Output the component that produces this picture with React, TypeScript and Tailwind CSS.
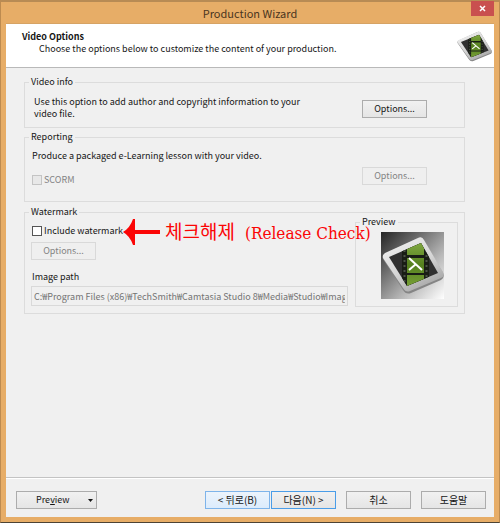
import type { ReactNode } from "react";

const uiFont = "font-['Noto_Sans_CJK_KR',sans-serif]";

type GroupProps = { title: string; className?: string; children: ReactNode };

function Group({ title, className = "", children }: GroupProps) {
  return (
    <fieldset className={`min-w-0 border border-[#dcdcdc] ${className}`}>
      <legend className="ml-1 px-0.5 leading-3">{title}</legend>
      {children}
    </fieldset>
  );
}

type ButtonProps = { tone?: "normal" | "hot" | "focus"; disabled?: boolean; children: ReactNode };

const tones = {
  normal: "border-[#acacac] bg-linear-to-b from-[#f1f1f1] to-[#e5e5e5]",
  hot: "border-[#7eb4ea] bg-linear-to-b from-[#ecf4fc] to-[#dcecfc]",
  focus: "border-[#4a9de8] bg-linear-to-b from-[#f1f1f1] to-[#e5e5e5]",
};

function Button({ tone = "normal", disabled = false, children }: ButtonProps) {
  return (
    <button
      type="button"
      disabled={disabled}
      className={`h-[18px] w-[65px] shrink-0 border text-center leading-4 whitespace-nowrap ${
        disabled ? "border-[#d9d9d9] bg-[#efefef] text-[#838383]" : tones[tone]
      }`}
    >
      {children}
    </button>
  );
}

function Logo({ className, backdrop = false }: { className: string; backdrop?: boolean }) {
  const id = backdrop ? "large" : "small";
  return (
    <svg
      className={className}
      viewBox={backdrop ? "0 0 63 67" : "1 4 62 59"}
      preserveAspectRatio="none"
      aria-hidden="true"
    >
      <defs>
        <linearGradient id={`${id}-back`} x1="0" y1="0" x2="1" y2="1">
          <stop offset="0" stopColor="#252525" />
          <stop offset=".3" stopColor="#666" />
          <stop offset=".65" stopColor="#b8b8b8" />
          <stop offset="1" stopColor="#fff" />
        </linearGradient>
        <linearGradient id={`${id}-frame`} x1="0" y1="0" x2=".6" y2="1">
          <stop offset="0" stopColor="#f4f4f4" />
          <stop offset=".6" stopColor="#d6d6d6" />
          <stop offset="1" stopColor="#a9a9a9" />
        </linearGradient>
        <linearGradient id={`${id}-green`} x1="0" y1="0" x2="0" y2="1">
          <stop offset="0" stopColor="#86ad45" />
          <stop offset=".5" stopColor="#55801f" />
          <stop offset="1" stopColor="#7da53a" />
        </linearGradient>
        <clipPath id={`${id}-screen`}>
          <path d="M8 25 40 11 57 41 26 54Z" />
        </clipPath>
      </defs>
      {backdrop && <rect width="63" height="67" fill={`url(#${id}-back)`} />}
      <path
        d="M2 27Q1 24 4 22L37 6Q41 4 43 8L62 41Q64 46 60 48L30 61Q25 63 22 58Z"
        fill="#858585"
      />
      <path
        d="M2 26Q1 23 4 21L37 6Q41 4 43 8L62 40Q64 44 60 46L29 59Q25 61 22 56Z"
        fill={`url(#${id}-frame)`}
      />
      <path d="M8 25 40 11 57 41 26 54Z" fill="#303030" />
      <g clipPath={`url(#${id}-screen)`}>
        <rect x="21" y="8" width="27" height="50" fill="#191d15" />
        <path d="M26 8H43V23H26ZM26 26H43V41H26ZM26 43H43V58H26Z" fill={`url(#${id}-green)`} />
        <path d="M23.500 13V56M45.500 13V56" stroke="#4c5347" strokeWidth="2" strokeDasharray="2 3" />
      </g>
      <path d="M28 26 41 38M35 32 28 38" fill="none" stroke="#fff" strokeWidth="2" />
    </svg>
  );
}

function Annotation() {
  return (
    <div className="absolute top-px left-[98px] flex items-center gap-1 whitespace-nowrap text-[#fb0505]">
      <svg className="h-[26px] w-[38px]" viewBox="0 0 38 26" aria-hidden="true">
        <path d="M0 13Q7 9 10 0H12V11H37V15H12V26H10Q7 17 0 13Z" fill="currentColor" />
      </svg>
      <p className="flex items-baseline gap-[10px] text-[19px] leading-6">
        <span className="font-['Noto_Sans_CJK_KR',sans-serif]">체크해제</span>
        <span className="font-['DejaVu_Serif_Condensed','DejaVu_Serif',serif] text-[17px]">(Release Check)</span>
      </p>
    </div>
  );
}

export default function App() {
  return (
    <div className={`flex min-h-screen flex-col border-x border-t-2 border-b border-x-[#bd8b50] border-t-[#b88b54] border-b-[#4c4334] bg-[#e7ad67] px-[5px] pb-[5px] text-[9px] text-[#161616] ${uiFont}`}>
      <header className="relative flex h-[21px] items-center justify-center text-[11px] leading-4 text-[#4a3520]">
        <h1>Production Wizard</h1>
        <button type="button" aria-label="Close" className="absolute -top-px right-0 flex h-[15px] w-[23px] items-center justify-center bg-[#c9504f]">
          <svg className="size-[7px]" viewBox="0 0 7 7" aria-hidden="true">
            <path d="m1 1 5 5M6 1 1 6" stroke="#fff" strokeWidth="1.5" />
          </svg>
        </button>
      </header>

      <main className="flex grow flex-col bg-[#f0f0f0]">
        <div className="flex h-[45px] items-start justify-between border-t border-b border-t-[#d6a364] border-b-[#b9b9b9] bg-white pt-[7px] pr-0.5 pl-4 leading-3">
          <div>
            <h2 className="font-bold">Video Options</h2>
            <p className="pl-[17px]">Choose the options below to customize the content of your production.</p>
          </div>
          <Logo className="h-[31px] w-[35px]" />
        </div>

        <div className="grow pt-2 pr-[29px] pl-[18px]">
          <Group title="Video info" className="h-[52px]">
            <div className="flex items-start justify-between pt-2 pr-[37px] pl-[9px]">
              <p className="leading-3">
                Use this option to add author and copyright information to your
                <br />
                video file.
              </p>
              <div className="pt-1">
                <Button>Options...</Button>
              </div>
            </div>
          </Group>

          <Group title="Reporting" className="mt-[3px] h-[71px]">
            <div className="flex justify-between pt-[7px] pr-[37px] pl-[7px]">
              <div>
                <p className="leading-3">Produce a packaged e-Learning lesson with your video.</p>
                <label className="mt-3 flex items-center gap-0.5 leading-3 text-[#838383]">
                  <input type="checkbox" disabled className="size-[10px] appearance-none border border-[#c4c4c4] bg-[#e8e8e8]" />
                  SCORM
                </label>
              </div>
              <div className="pt-[17px]">
                <Button disabled>Options...</Button>
              </div>
            </div>
          </Group>

          <Group title="Watermark" className="relative mt-1 h-[108px]">
            <div className="flex gap-[7px] pr-[6px] pl-[6px]">
              <div className="min-w-0 grow pt-[7px]">
                <label className="flex items-center gap-0.5 pl-px leading-3">
                  <input type="checkbox" className="size-[10px] appearance-none border border-[#555] bg-white" />
                  Include watermark
                </label>
                <div className="mt-[5px] flex">
                  <Button disabled>Options...</Button>
                </div>
                <label htmlFor="image-path" className="mt-[11px] block pl-px leading-3">
                  Image path
                </label>
                <input
                  id="image-path"
                  readOnly
                  value="C:₩Program Files (x86)₩TechSmith₩Camtasia Studio 8₩Media₩Studio₩Images"
                  className="mt-[3px] block h-5 w-full border border-[#d9d9d9] px-0.5 text-[#747474]"
                />
              </div>
              <Group title="Preview" className="mt-[-2px] h-[91px] w-[103px] shrink-0">
                <Logo backdrop className="mt-1 ml-[25px] h-[67px] w-[63px]" />
              </Group>
            </div>
            <Annotation />
          </Group>
        </div>

        <footer className="flex items-center justify-between border-t border-[#c3c3c3] pt-[13px] pr-2 pb-2 pl-[10px] shadow-[inset_0_1px_white]">
          <button type="button" className="flex h-[18px] w-[81px] items-center justify-between border border-[#acacac] bg-linear-to-b from-[#f1f1f1] to-[#e5e5e5] pr-[3px] pl-[19px]">
            <span>
              Pre<u>v</u>iew
            </span>
            <svg className="h-[3px] w-[5px]" viewBox="0 0 5 3" aria-hidden="true">
              <path d="M0 0h5L2.500 3Z" fill="currentColor" />
            </svg>
          </button>
          <div className="flex gap-[10px] text-[10px]">
            <div className="flex gap-px">
              <Button tone="hot">&lt; 뒤로(B)</Button>
              <Button tone="focus">다음(N) &gt;</Button>
            </div>
            <Button>취소</Button>
            <Button>도움말</Button>
          </div>
        </footer>
      </main>
    </div>
  );
}
